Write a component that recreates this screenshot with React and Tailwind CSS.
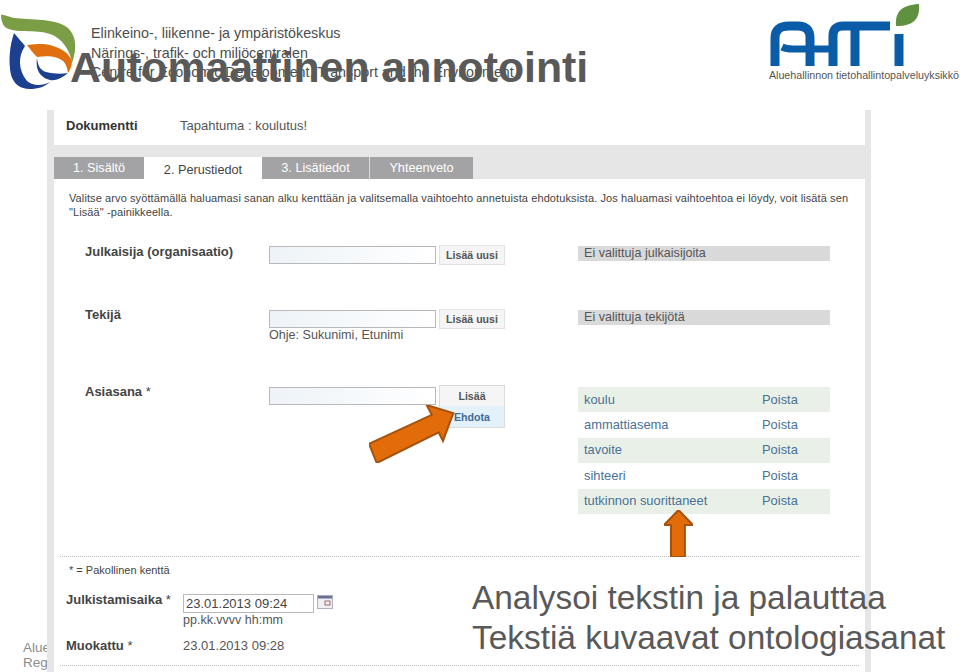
const rows = ["koulu", "ammattiasema", "tavoite", "sihteeri", "tutkinnon suorittaneet"];

function ElyLogo() {
  return (
    <svg width="78" height="90" viewBox="0 0 78 90" className="shrink-0">
      <path d="M1 15 C4 14 8 17 14 18 C30 20 56 18 68 28 C78 38 76 52 72 63 C70 50 62 38 50 34 C36 29 14 34 5 27 C2 24 1 18 1 15 Z" fill="#7b9d46" />
      <path d="M14 33 C18 38 22 42 25 46 C18 56 18 70 27 81 C33 86 42 86 50 82 C44 87 38 89 30 89 C20 89 14 84 11 75 C8 60 10 45 14 33 Z" fill="#1d3f8f" />
      <path d="M37 58 C38 66 40 70 46 72 C54 74 62 74 68 73 C62 78 56 81 50 80 C42 78 35 72 37 58 Z" fill="#1d3f8f" />
      <path d="M27 45 C34 44 38 44 43 44 C54 45 68 50 72 61 C72 66 70 70 68 73 C67 67 66 64 63 61 C58 57 50 55 37 57 C33 53 30 49 27 45 Z" fill="#e0700f" />
    </svg>
  );
}

function AhtiLogo() {
  return (
    <svg width="151" height="66" viewBox="768 3 151 66">
      <g fill="none" stroke="#0b5ca8" strokeWidth="9">
        <path d="M774 66 V38 Q774 26 788 26 H797 Q809 26 809 38 V66" />
        <path d="M781 47 Q785 49 792 49 H830" strokeWidth="7" />
        <path d="M832 66 V36 Q832 26 842 26 H889" />
        <path d="M854 66 V28" />
        <path d="M898 66 V34" />
      </g>
      <path d="M895 26 C894 12 900 5 918 4 C919 18 914 26 895 26 Z" fill="#5f9140" />
    </svg>
  );
}

function Arrow({ className, points }) {
  return (
    <svg className={className} viewBox="0 0 100 100" preserveAspectRatio="none">
      <polygon points={points} fill="#e36c0a" stroke="#a5520c" strokeWidth="2" vectorEffect="non-scaling-stroke" />
    </svg>
  );
}

function TextInput({ className = "" }) {
  return (
    <div className={`h-[18px] w-[167px] border border-[#b9b9b9] bg-gradient-to-r from-[#edf3f8] to-white ${className}`} />
  );
}

function AddButton({ label }) {
  return (
    <div className="ml-[3px] flex h-5 w-[66px] items-center justify-center border border-[#e2e2e2] bg-[#f5f5f5] text-[10.6px] font-bold text-[#555]">
      {label}
    </div>
  );
}

export default function App() {
  return (
    <div className="relative h-[672px] w-[960px] overflow-hidden bg-white font-['Liberation_Sans',Arial,sans-serif]">
      {/* slide header */}
      <header className="flex h-[110px] justify-between">
        <div className="flex">
          <div className="w-[91px]"><ElyLogo /></div>
          <div className="pt-[24px] text-[14.3px] leading-[19.5px] text-[#4d4d4d]">
            <p>Elinkeino-, liikenne- ja ympäristökeskus</p>
            <p>Närings-, trafik- och miljöcentralen</p>
            <p>Centre for Economic Development, Transport and the Environment</p>
          </div>
        </div>
        <div className="mr-[1px] pt-[3px]">
          <AhtiLogo />
          <p className="text-[10.7px] leading-[13px] text-[#555]">Aluehallinnon tietohallintopalveluyksikkö</p>
        </div>
      </header>

      <h1 className="absolute left-[70px] top-[42px] text-[42.8px] font-bold leading-[50px] text-[#595959]">
        Automaattinen annotointi
      </h1>

      {/* footer text behind the screenshot */}
      <div className="absolute left-[23px] top-[640px] text-[13.5px] leading-[15px] text-[#8c8c8c]">
        <p>Aluehallinto</p>
        <p>Regionförvaltning</p>
      </div>

      {/* embedded screenshot */}
      <main className="relative ml-[47px] h-[562px] w-[824px] border-l-[7px] border-r-[6px] border-[#e6e6e6] bg-white text-[#444]">
        <div className="flex h-[31px] items-center pl-[12px] text-[13px]">
          <span className="w-[114px] font-bold text-[#333]">Dokumentti</span>
          <span className="text-[#555]">Tapahtuma : koulutus!</span>
        </div>

        <nav className="mt-[4px] flex h-[34px] items-end bg-[#e6e6e6] text-[12.7px]">
          <div className="flex h-[22px] w-[90px] items-center justify-center bg-[#a3a3a6] pt-[1px] text-white">1. Sisältö</div>
          <div className="flex h-[22px] w-[118px] items-center justify-center bg-white pt-[6px] text-[#444]">2. Perustiedot</div>
          <div className="flex h-[22px] w-[108px] items-center justify-center border-r border-[#ddd] bg-[#a3a3a6] pt-[1px] text-white">3. Lisätiedot</div>
          <div className="flex h-[22px] w-[103px] items-center justify-center bg-[#a3a3a6] pt-[1px] text-white">Yhteenveto</div>
        </nav>

        <p className="pl-[15px] pt-[13px] text-[11px] leading-[13.5px] tracking-[0.1px] text-[#444]">
          Valitse arvo syöttämällä haluamasi sanan alku kenttään ja valitsemalla vaihtoehto annetuista ehdotuksista. Jos haluamasi vaihtoehtoa ei löydy, voit lisätä sen
          <br />"Lisää" -painikkeella.
        </p>

        <section className="mt-[26px] flex h-[64px] pl-[31px] text-[12.6px] leading-[14px]">
          <span className="w-[184px] text-[13px] font-bold text-[#444]">Julkaisija (organisaatio)</span>
          <div className="flex w-[309px] items-start">
            <TextInput className="mt-[1px]" />
            <AddButton label="Lisää uusi" />
          </div>
          <div className="mt-[1px] h-[15px] w-[252px] bg-[#d9d9d9] pl-[6px] leading-[15px] text-[#555]">Ei valittuja julkaisijoita</div>
        </section>

        <section className="flex h-[78px] pl-[31px] text-[12.6px] leading-[14px]">
          <span className="mt-[-1px] w-[184px] text-[13px] font-bold text-[#444]">Tekijä</span>
          <div className="w-[309px]">
            <div className="flex items-start">
              <TextInput className="mt-[1px]" />
              <AddButton label="Lisää uusi" />
            </div>
            <p className="mt-[-1px] text-[#555]">Ohje: Sukunimi, Etunimi</p>
          </div>
          <div className="mt-[1px] h-[15px] w-[252px] bg-[#d9d9d9] pl-[6px] leading-[15px] text-[#555]">Ei valittuja tekijötä</div>
        </section>

        <section className="flex h-[169px] pl-[31px] leading-[14px]">
          <span className="mt-[-2px] w-[184px] text-[13px] font-bold text-[#444]">Asiasana <span className="font-normal">*</span></span>
          <div className="flex w-[309px] items-start">
            <TextInput />
            <div className="ml-[3px] mt-[-2px] w-[66px] border border-[#dcdcdc] text-[10.6px] font-bold">
              <div className="flex h-5 items-center justify-center bg-[#f5f5f5] text-[#555]">Lisää</div>
              <div className="flex h-[21px] items-center justify-center bg-[#e3f1fb] text-[#3f6b96]">Ehdota</div>
            </div>
          </div>
          <div className="w-[252px] text-[12.9px] text-[#4a7196]">
            {rows.map((row, i) => (
              <div key={row} className={`flex h-[25.4px] items-center pl-[6px] ${i % 2 === 0 ? "bg-[#e9f0e7]" : ""}`}>
                <span className="w-[178px]">{row}</span>
                <span>Poista</span>
              </div>
            ))}
          </div>
        </section>

        <div className="mx-[6px] border-t border-dotted border-[#bbb]" />

        <p className="pl-[15px] pt-[6px] text-[11px] leading-[14px] text-[#444]">* = Pakollinen kenttä</p>

        <section className="mt-[17px] flex pl-[12px] text-[13px] leading-[14px]">
          <span className="mt-[-1px] w-[117px] font-bold text-[#444]">Julkistamisaika <span className="font-normal">*</span></span>
          <div>
            <div className="flex items-start">
              <div className="flex h-[19px] w-[131px] items-center border border-[#b9b9b9] pl-[2px] text-[#444]">23.01.2013 09:24</div>
              <svg width="16" height="14" viewBox="0 0 16 14" className="ml-[3px] mt-[1px]">
                <rect x="0.5" y="0.5" width="15" height="13" fill="#eef0f6" stroke="#aeb0c0" />
                <rect x="1" y="1" width="14" height="2.5" fill="#6a6f95" />
                <rect x="8" y="6" width="5" height="4" fill="none" stroke="#a06a6a" />
              </svg>
            </div>
            <p className="text-[12.5px] text-[#555]">pp.kk.vvvv hh:mm</p>
          </div>
        </section>

        <section className="mt-[12px] flex pl-[12px] text-[13px] leading-[14px]">
          <span className="w-[117px] font-bold text-[#444]">Muokattu <span className="font-normal">*</span></span>
          <span className="text-[#555]">23.01.2013 09:28</span>
        </section>

        <div className="mx-[6px] mt-[12px] border-t border-dotted border-[#bbb]" />
      </main>

      {/* slide annotations */}
      <Arrow className="absolute left-[369px] top-[405px] h-[58px] w-[86px]" points="98,14 86,62 81,47 9,100 0,67 73,17 67,0" />
      <Arrow className="absolute left-[664px] top-[510px] h-[47px] w-[29px]" points="50,0 100,32 72,32 72,100 24,100 24,32 0,32" />

      <div className="absolute left-[472px] top-[578px] text-[33.4px] leading-[40px] text-[#595959]">
        <p>Analysoi tekstin ja palauttaa</p>
        <p>Tekstiä kuvaavat ontologiasanat</p>
      </div>
    </div>
  );
}
